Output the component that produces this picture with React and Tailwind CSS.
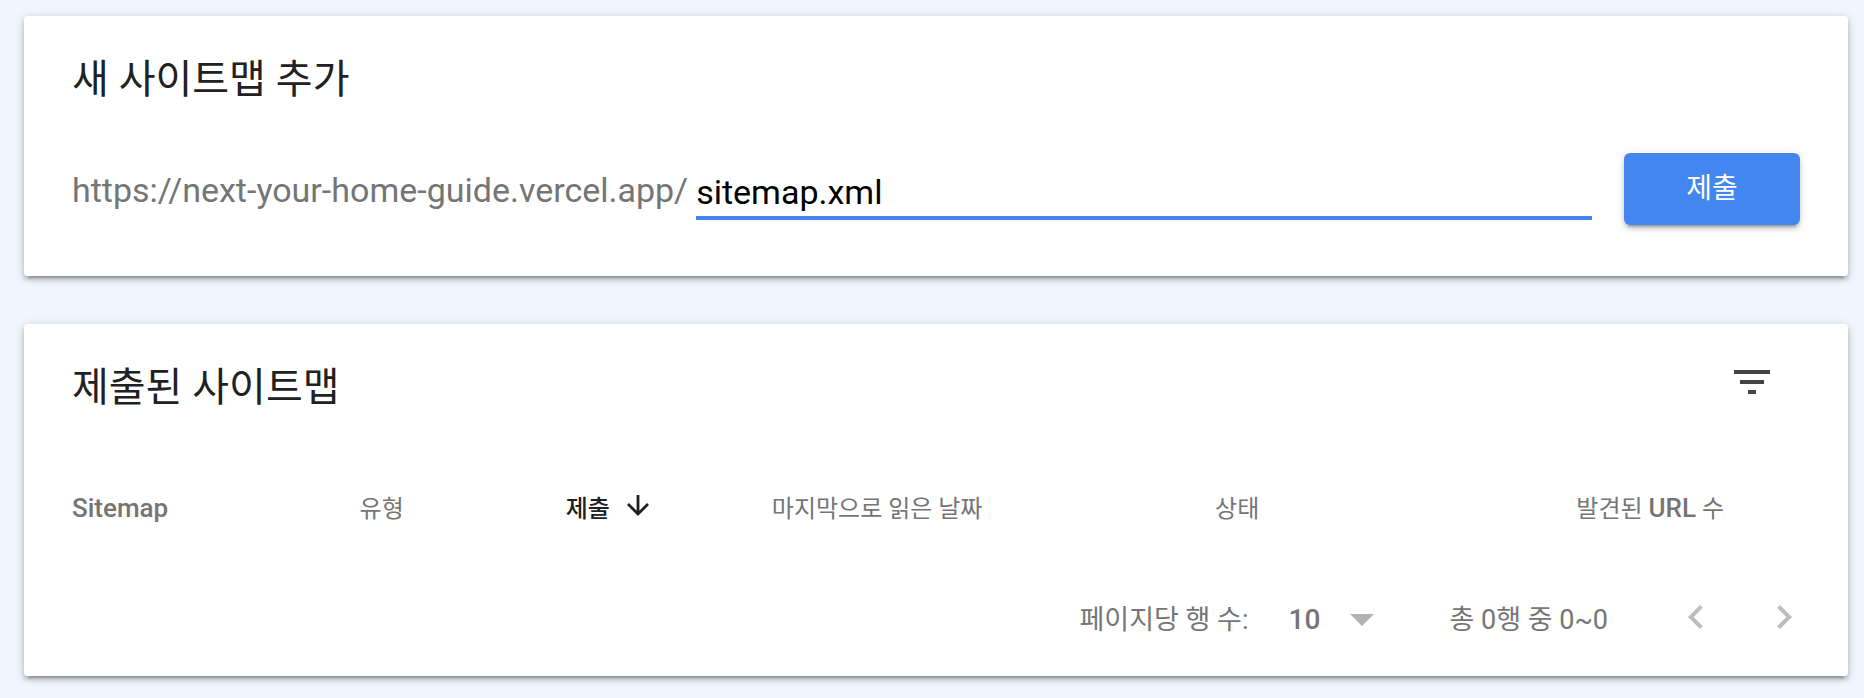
const CARD =
  "rounded bg-white shadow-[0_4px_4px_0_rgba(0,0,0,0.14),0_6px_2px_-4px_rgba(0,0,0,0.2),0_2px_10px_0_rgba(0,0,0,0.2)]";

const HEADERS = [
  { key: "sitemap", label: <span className="text-[26px] font-medium">Sitemap</span>, width: "w-[18.4%]", first: true },
  { key: "type", label: "유형", width: "w-[11.3%]" },
  { key: "submitted", label: "제출", width: "w-[11.3%]", sorted: true },
  { key: "read", label: "마지막으로 읽은 날짜", width: "w-[24.3%]" },
  { key: "status", label: "상태", width: "w-[12%]" },
  {
    key: "urls",
    label: (
      <>
        발견된 <span className="text-[26px] font-medium">URL</span> 수
      </>
    ),
    width: "",
    end: true,
  },
];

function AddSitemap() {
  return (
    <section className={`${CARD} px-12 pt-[38px] pb-[51px]`}>
      <h2 className="text-[40px] leading-[52px] text-[#212121]">새 사이트맵 추가</h2>
      <form className="mt-[47px] flex items-start" onSubmit={(e) => e.preventDefault()}>
        <label htmlFor="sitemap-path" className="pt-[17px] text-[34px] leading-10 text-[#757575]">
          https://next-your-home-guide.vercel.app/
        </label>
        <input
          id="sitemap-path"
          type="text"
          defaultValue="sitemap.xml"
          className="mt-[19px] ml-2 h-12 min-w-0 flex-1 border-b-4 border-[#4486f0] pb-1 text-[34px] leading-10 text-black outline-none"
        />
        <button
          type="submit"
          className="ml-8 h-[72px] w-44 rounded-md bg-[#4486f0] text-[28px] text-white shadow-[0_4px_4px_0_rgba(0,0,0,0.14),0_6px_2px_-4px_rgba(0,0,0,0.2),0_2px_10px_0_rgba(0,0,0,0.12)]"
        >
          제출
        </button>
      </form>
    </section>
  );
}

function SubmittedSitemaps() {
  return (
    <section className={`${CARD} pt-[34px] pb-[29px]`}>
      <div className="flex items-start justify-between pr-[72px] pl-12">
        <h2 className="pt-1 text-[40px] leading-[52px] text-[#212121]">제출된 사이트맵</h2>
        <button type="button" aria-label="필터" className="size-12 text-[#444444]">
          <svg viewBox="0 0 24 24" className="size-12" fill="currentColor">
            <path d="M10 18h4v-2h-4v2zM3 6v2h18V6H3zm3 7h12v-2H6v2z" />
          </svg>
        </button>
      </div>
      <table className="mt-[62px] w-full table-fixed text-left text-2xl leading-8 text-[#757575]">
        <thead>
          <tr>
            {HEADERS.map((h) => (
              <th
                key={h.key}
                scope="col"
                aria-sort={h.sorted ? "descending" : undefined}
                className={`${h.width} py-4 leading-8 ${h.first ? "pl-12" : ""} ${
                  h.end ? "pr-[124px] text-right" : ""
                } ${h.sorted ? "font-medium text-[#212121]" : "font-normal"}`}
              >
                {h.sorted ? (
                  <span className="flex items-center gap-[14px]">
                    {h.label}
                    <svg viewBox="0 0 28 28" className="size-7" fill="none" stroke="currentColor" strokeWidth="2.8">
                      <path d="M14 0v19M4 9l10 10 10-10" />
                    </svg>
                  </span>
                ) : (
                  h.label
                )}
              </th>
            ))}
          </tr>
        </thead>
      </table>
      <div className="mt-[52px] flex items-center justify-end pr-10 text-[27px] leading-10 text-[#757575]">
        <label htmlFor="page-size">페이지당 행 수:</label>
        <span className="relative ml-10 flex items-center">
          <select
            id="page-size"
            defaultValue="10"
            className="w-[85px] appearance-none bg-transparent text-[28px] font-medium outline-none"
          >
            <option>10</option>
            <option>25</option>
            <option>50</option>
          </select>
          <svg viewBox="0 0 24 12" className="pointer-events-none absolute right-0 h-3 w-6" fill="#b3b3b3">
            <path d="M0 0h24L12 12z" />
          </svg>
        </span>
        <span className="ml-[76px]">총 0행 중 0~0</span>
        <div className="ml-16 flex gap-10 pb-[6px] text-[#bdbdbd]">
          <button type="button" aria-label="이전 페이지" disabled className="size-12">
            <svg viewBox="0 0 24 24" className="size-12" fill="currentColor">
              <path d="M15.41 7.41L14 6l-6 6 6 6 1.41-1.41L10.83 12z" />
            </svg>
          </button>
          <button type="button" aria-label="다음 페이지" disabled className="size-12">
            <svg viewBox="0 0 24 24" className="size-12" fill="currentColor">
              <path d="M10 6L8.59 7.41 13.17 12l-4.58 4.59L10 18l6-6z" />
            </svg>
          </button>
        </div>
      </div>
    </section>
  );
}

export default function App() {
  return (
    <main
      lang="ko"
      className="flex min-h-screen flex-col gap-12 bg-[#f1f5fd] py-4 pr-4 pl-6 font-[Roboto,'Noto_Sans_CJK_KR',sans-serif]"
    >
      <AddSitemap />
      <SubmittedSitemaps />
    </main>
  );
}
